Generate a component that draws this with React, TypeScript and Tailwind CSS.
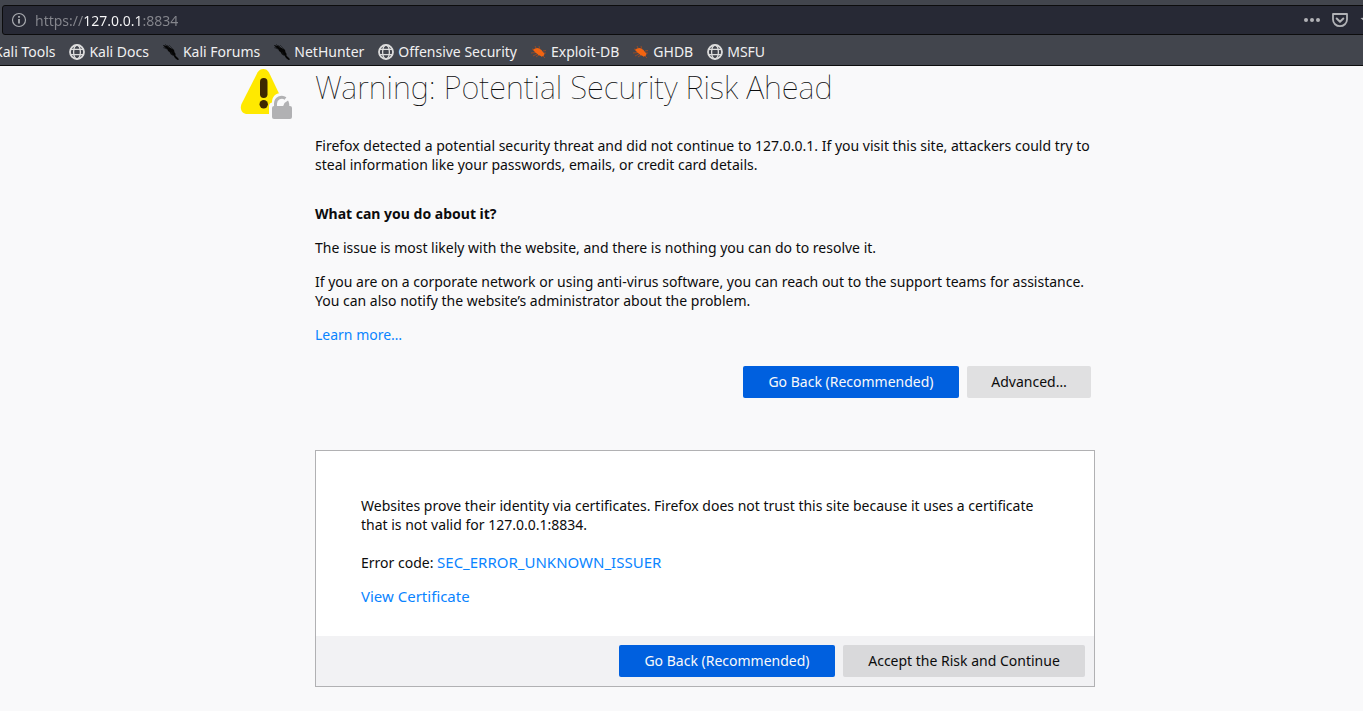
import React from "react";

function InfoIcon() {
  return (
    <svg viewBox="0 0 16 16" className="size-4 shrink-0" fill="none" stroke="#a9abb0" aria-hidden="true">
      <circle cx="8" cy="8" r="6.5" strokeWidth="1.2" />
      <path d="M8 7v4.5M8 4v1.7" strokeWidth="1.8" />
    </svg>
  );
}

function GlobeIcon() {
  return (
    <svg viewBox="0 0 16 16" className="size-4 shrink-0" fill="none" stroke="#dcdcdc" aria-hidden="true">
      <circle cx="8" cy="8" r="7" strokeWidth="1.8" />
      <ellipse cx="8" cy="8" rx="3.4" ry="7" strokeWidth="1.3" />
      <path d="M1.5 5.4h13M1.5 10.6h13" strokeWidth="1.3" />
    </svg>
  );
}

function DragonIcon() {
  return (
    <svg viewBox="0 0 16 16" className="size-4 shrink-0" aria-hidden="true">
      <path
        d="M0 1l3 .8 2-.3 1 1.500 3 1.800 2 1 .5 2.500 1 1.500v2L15 14l1 1.500-1.500.5-2.500-2-1.500-2.500-2.500-1L6.500 8 5 7 4.500 5.500 2 4z"
        fill="#050505"
      />
      <path d="M0 1l4 4M0 3.500l4 1.500M2 0l4 4M6 1l4 4M8 8l2 4" stroke="#17191c" strokeWidth=".6" />
    </svg>
  );
}

function BugIcon() {
  return (
    <svg viewBox="0 0 16 16" className="size-4 shrink-0" aria-hidden="true">
      <path
        d="M1 5l4 1M4 2l2 4M8 2l1 4M0 9l5-.5M2 12l4-2M5 13l3-2M10 13l1-1M12 7l3-.5M13 9h2M12 12l2 2"
        stroke="#a94b1d"
        strokeWidth=".8"
      />
      <path d="M2 6l2-1.500L7 4l3.500 2L12 8l1.500 1.500-.5 2-2 1L7.500 11 4.500 8.500z" fill="#f26411" />
    </svg>
  );
}

function PocketIcon() {
  return (
    <svg viewBox="0 0 16 16" className="size-4" fill="none" stroke="#b1b2b6" strokeLinejoin="round" strokeLinecap="round" aria-hidden="true">
      <path d="M1 2h14v5.500a7 6.700 0 0 1-14 0z" strokeWidth="1.800" />
      <path d="M4.700 6.500L8 9.700l3.300-3.200" strokeWidth="2" />
    </svg>
  );
}

function DotsIcon() {
  return (
    <svg viewBox="0 0 16 16" className="size-4" fill="#b1b2b6" aria-hidden="true">
      <circle cx="2" cy="8" r="2" />
      <circle cx="8" cy="8" r="2" />
      <circle cx="14" cy="8" r="2" />
    </svg>
  );
}

function WarningIcon() {
  return (
    <svg viewBox="0 0 52 52" className="mt-[3px] size-[52px] shrink-0" aria-hidden="true">
      <path
        d="M17.500 3.500C19 1 21 0 23.300 0s4.300 1 5.700 3.500L44 35c2 5-1 10-6 10H7.500C2 45-.5 40 1.500 35z"
        fill="#ffe900"
      />
      <rect x="20" y="9" width="7.500" height="20" rx="3.700" fill="#3e2800" />
      <circle cx="23.700" cy="35.300" r="4.200" fill="#3e2800" />
      <path d="M29 50V37c0-2 1-3 3-3.500C32 27 36 24 42 24c5 1 7 4 8 9l2 2v15z" fill="#f9f9fa" />
      <path d="M35.500 38v-3.500a6.300 6.300 0 0 1 10-5" fill="none" stroke="#b1b1b3" strokeWidth="3" />
      <path d="M48 31.500c1 1.500 1.300 3 1.300 6H43l1.500-3.500z" fill="#b1b1b3" />
      <rect x="32" y="37" width="20" height="13" rx="2" fill="#b1b1b3" />
    </svg>
  );
}

const bookmarks = [
  { label: "Kali Docs", icon: <GlobeIcon /> },
  { label: "Kali Forums", icon: <DragonIcon /> },
  { label: "NetHunter", icon: <DragonIcon /> },
  { label: "Offensive Security", icon: <GlobeIcon /> },
  { label: "Exploit-DB", icon: <BugIcon /> },
  { label: "GHDB", icon: <BugIcon /> },
  { label: "MSFU", icon: <GlobeIcon /> },
];

function Button({ className, children }: { className: string; children: React.ReactNode }) {
  return (
    <button type="button" className={"h-8 rounded-[2px] px-6 pb-px " + className}>
      {children}
    </button>
  );
}

export default function App() {
  return (
    <div className="min-h-screen overflow-x-hidden bg-[#f9f9fa] font-['Noto_Sans',sans-serif] text-sm leading-[19px] text-[#0c0c0d]">
      <header className="overflow-hidden border-b border-[#0c0c0d] bg-[#42454d] pt-[5px]">
        <div className="-mr-[22px] ml-0.5 flex h-[30px] items-center gap-2 rounded-[3px] border border-[#0c0c0d] bg-[#272935] px-2">
          <InfoIcon />
          <input
            type="text"
            aria-label="Address"
            defaultValue="https://127.0.0.1:8834"
            className="min-w-0 flex-1 bg-[linear-gradient(90deg,#85868d_48px,#f9f9fa_48px,#f9f9fa_107px,#85868d_107px)] bg-clip-text pt-px text-transparent outline-none"
          />
          <div className="flex items-center gap-3">
            <button type="button" aria-label="Page actions"><DotsIcon /></button>
            <button type="button" aria-label="Save to Pocket"><PocketIcon /></button>
            <button type="button" aria-label="Bookmark this page">
              <svg viewBox="0 0 16 16" className="size-4" fill="#b1b2b6" aria-hidden="true">
                <path d="M8 .5l2.300 4.800 5.200.7-3.800 3.600.9 5.200L8 12.300l-4.600 2.500.9-5.200L.5 6l5.200-.7z" />
              </svg>
            </button>
          </div>
        </div>
        <nav aria-label="Bookmarks" className="-ml-1.5 flex h-[30px] items-center gap-3.5 pt-[3px] whitespace-nowrap text-[#f0f0f1]">
          <a href="#tools">Kali Tools</a>
          {bookmarks.map((item) => (
            <a key={item.label} href="#bookmark" className="flex items-center gap-1">
              {item.icon}
              {item.label}
            </a>
          ))}
        </nav>
      </header>

      <main className="mx-auto flex max-w-[883px] gap-[23px] pr-7">
        <WarningIcon />
        <div className="min-w-0 flex-1">
          <h1 className="text-[31px] leading-[42px] font-thin">Warning: Potential Security Risk Ahead</h1>
          <p className="mt-7">
            Firefox detected a potential security threat and did not continue to 127.0.0.1. If you visit this site, attackers could try to steal information like your passwords, emails, or credit card details.
          </p>
          <h2 className="mt-[30px] font-bold">What can you do about it?</h2>
          <p className="mt-[15px]">The issue is most likely with the website, and there is nothing you can do to resolve it.</p>
          <p className="mt-[15px]">
            If you are on a corporate network or using anti-virus software, you can reach out to the support teams for assistance. You can also notify the website’s administrator about the problem.
          </p>
          <a href="#learn" className="mt-[15px] block text-[#0a84ff]">Learn more…</a>
          <div className="mt-[22px] flex justify-end gap-2 pr-1">
            <Button className="min-w-[216px] bg-[#0060df] text-[#f9f9fa]">Go Back (Recommended)</Button>
            <Button className="min-w-[124px] bg-[#e0e0e1]">Advanced…</Button>
          </div>

          <section className="mt-[52px] border border-[#b1b1b3] bg-white">
            <div className="px-[45px] pt-[45px] pb-[30px]">
              <p>
                Websites prove their identity via certificates. Firefox does not trust this site because it uses a certificate that is not valid for 127.0.0.1:8834.
              </p>
              <p className="mt-[19px]">
                Error code: <a href="#error" className="text-[15px] text-[#0a84ff]">SEC_ERROR_UNKNOWN_ISSUER</a>
              </p>
              <a href="#certificate" className="mt-[15px] block text-[15px] text-[#0a84ff]">View Certificate</a>
            </div>
            <div className="flex justify-end gap-2 bg-[#f2f2f4] py-[9px] pr-[9px]">
              <Button className="min-w-[216px] bg-[#0060df] text-[#f9f9fa]">Go Back (Recommended)</Button>
              <Button className="min-w-[242px] bg-[#d9d9db]">Accept the Risk and Continue</Button>
            </div>
          </section>
        </div>
      </main>
    </div>
  );
}
